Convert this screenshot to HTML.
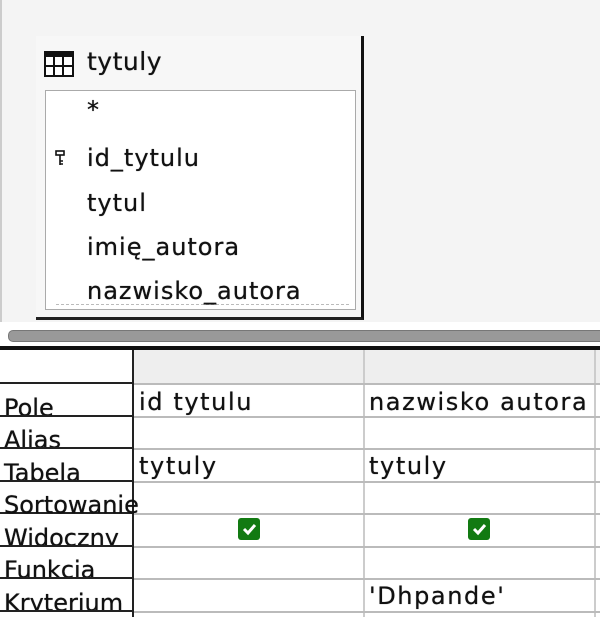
<!DOCTYPE html>
<html><head><meta charset="utf-8"><style>
body{margin:0;width:600px;height:617px;overflow:hidden;background:#fff;font-family:"DejaVu Sans","Liberation Sans",sans-serif;color:#111;position:relative;text-shadow:0 0 .6px #000}
.top{position:absolute;left:0;top:0;width:600px;height:322px;background:#f4f4f4;border-left:2px solid #ccc;box-sizing:border-box}
.win{position:absolute;left:36px;top:36px;width:328px;height:284px;background:#f7f7f7;border-right:3px solid #111;border-bottom:3px solid #222;box-sizing:border-box}
.title{position:absolute;top:47px;font-size:25px;letter-spacing:0.5px}
.list{position:absolute;left:45px;top:90px;width:311px;height:220px;background:#fff;border:1px solid #aaa;box-sizing:border-box}
.list:after{content:"";position:absolute;left:10px;right:6px;bottom:4px;border-top:1px dashed #bbb}
.f{position:absolute;left:87px;font-size:24px;line-height:26px;letter-spacing:1px}
.scroll{position:absolute;left:8px;top:330px;width:600px;height:10px;background:#999;border-radius:5px;border:1px solid #777}
.thick{position:absolute;left:0;top:346px;width:600px;height:4px;background:#111}
.hdr{position:absolute;left:134px;top:350px;width:466px;height:33px;background:#eee}
.lab{position:absolute;left:0;width:133px;height:32px;border-bottom:2px solid #222;font-size:24px;overflow:hidden;box-sizing:border-box}
.lab span{position:absolute;left:4px;bottom:-7px;white-space:nowrap}
.hl{position:absolute;left:134px;width:466px;height:2px;background:#bbb}
.vl{position:absolute;top:350px;height:267px;width:2px;background:#ccc}
.c{position:absolute;font-size:24px;white-space:nowrap;letter-spacing:1.6px}
.ck{position:absolute;width:22px;height:22px;background:#127a12;border-radius:3px}
</style></head><body>
<div class="top"></div>
<div class="win"></div>
<svg style="position:absolute;left:44px;top:51px" width="30" height="26" viewBox="0 0 30 26"><rect x="1" y="1" width="28" height="24" fill="#fff" stroke="#111" stroke-width="2"/><rect x="1" y="1" width="28" height="5" fill="#111"/><path d="M10 6V25M19 6V25M1 15H29" stroke="#111" stroke-width="2"/></svg>
<div class="title" style="left:87px">tytuly</div>
<div class="list"></div>
<div class="f" style="top:97px">*</div>
<svg style="position:absolute;left:55px;top:150px" width="10" height="16" viewBox="0 0 10 16"><rect x="1" y="1" width="8" height="4" fill="none" stroke="#111" stroke-width="1.6"/><path d="M5 5V15M5 11H8M5 14H8" stroke="#111" stroke-width="1.6"/></svg>
<div class="f" style="top:145px">id_tytulu</div>
<div class="f" style="top:190px">tytul</div>
<div class="f" style="top:234px">imię_autora</div>
<div class="f" style="top:278px">nazwisko_autora</div>
<div class="scroll"></div>
<div class="thick"></div>
<div class="hdr"></div>
<div style="position:absolute;left:132px;top:350px;width:2px;height:267px;background:#222"></div>
<div class="vl" style="left:363px"></div>
<div class="vl" style="left:594px"></div>
<div class="lab" style="top:350px;height:34px"></div>
<div class="lab" style="top:384px;height:33px"><span>Pole</span></div>
<div class="lab" style="top:417px"><span>Alias</span></div>
<div class="lab" style="top:449px;height:33px"><span>Tabela</span></div>
<div class="lab" style="top:482px;overflow:visible"><span>Sortowanie</span></div>
<div class="lab" style="top:514px;height:33px"><span>Widoczny</span></div>
<div class="lab" style="top:547px"><span>Funkcja</span></div>
<div class="lab" style="top:579px;height:33px"><span>Kryterium</span></div>
<div class="hl" style="top:383px"></div><div class="hl" style="top:416px"></div><div class="hl" style="top:448px"></div><div class="hl" style="top:481px"></div><div class="hl" style="top:513px"></div><div class="hl" style="top:546px"></div><div class="hl" style="top:578px"></div><div class="hl" style="top:611px"></div>
<div class="c" style="left:139px;top:388px">id tytulu</div>
<div class="c" style="left:369px;top:388px">nazwisko autora</div>
<div class="c" style="left:139px;top:452px">tytuly</div>
<div class="c" style="left:369px;top:452px">tytuly</div>
<div class="ck" style="left:238px;top:518px"></div>
<div class="ck" style="left:468px;top:518px"></div>
<svg style="position:absolute;left:238px;top:518px" width="22" height="22"><path d="M6 11l4 4 7-8" stroke="#fff" stroke-width="3" fill="none"/></svg>
<svg style="position:absolute;left:468px;top:518px" width="22" height="22"><path d="M6 11l4 4 7-8" stroke="#fff" stroke-width="3" fill="none"/></svg>
<div class="c" style="left:369px;top:582px">'Dhpande'</div>
</body></html>
